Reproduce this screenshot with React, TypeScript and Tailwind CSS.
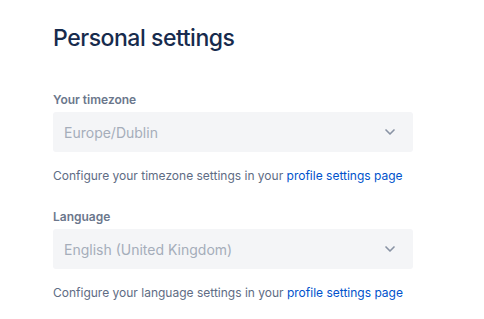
import { ChevronDown } from 'lucide-react';

interface SelectFieldProps {
    id: string;
    label: string;
    value: string;
    helpTopic: string;
}

function SelectField({ id, label, value, helpTopic }: SelectFieldProps) {
    return (
        <div>
            <label htmlFor={id} className="block text-[12px] font-semibold leading-4 text-[#6B778C]">
                {label}
            </label>
            <div
                id={id}
                className="mt-1 flex h-10 w-[360px] items-center justify-between rounded-[3px] bg-[#F4F5F7] pl-[11px] pr-[15px]"
            >
                <span className="text-[14px] text-[#A5ADBA]">{value}</span>
                <ChevronDown className="h-4 w-4 text-[#8993A4]" strokeWidth={2.5} />
            </div>
            <p className="mt-4 text-[12px] leading-4 text-[#5E6C84]">
                Configure your {helpTopic} settings in your{' '}
                <a href="#" className="text-[#0052CC]">
                    profile settings page
                </a>
            </p>
        </div>
    );
}

export default function App() {
    return (
        <div className="min-h-[319px] bg-white px-[53px] pt-[24px] font-['Inter',sans-serif]">
            <h1 className="text-[23px] font-medium leading-7 tracking-[-0.02em] text-[#172B4D]">
                Personal settings
            </h1>

            <div className="mt-[40px] space-y-[25px]">
                <SelectField id="timezone" label="Your timezone" value="Europe/Dublin" helpTopic="timezone" />
                <SelectField id="language" label="Language" value="English (United Kingdom)" helpTopic="language" />
            </div>
        </div>
    );
}
